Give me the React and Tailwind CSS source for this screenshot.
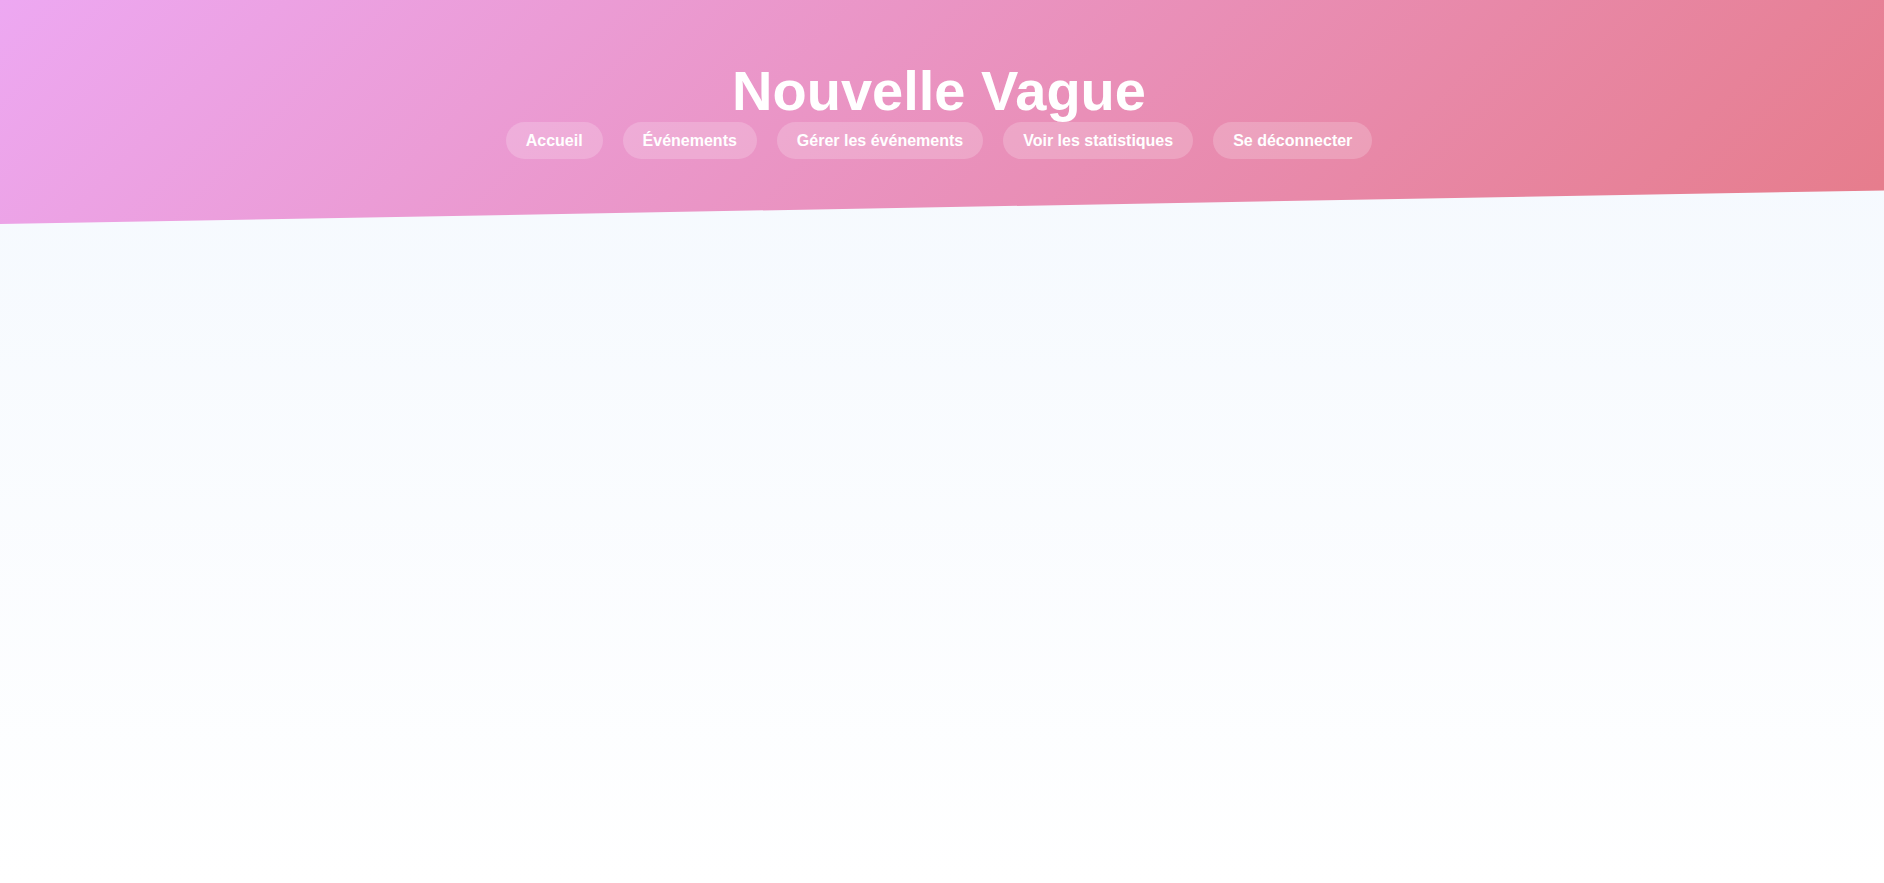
import React from 'react'

const NAV = ['Accueil', 'Événements', 'Gérer les événements', 'Voir les statistiques', 'Se déconnecter']

// ── En-tête en biais ─────────────────────────────────────────
function Header() {
  return (
    <header className="h-[224px] pt-[63px] pr-[6px] bg-[linear-gradient(135deg,#eda8f2_0%,#e67c8b_100%)] [clip-path:polygon(0_0,100%_0,100%_85%,0_100%)]">
      <h1 className="text-center text-white font-bold text-[56px] leading-none">Nouvelle Vague</h1>
      <nav className="mt-[3px] flex justify-center gap-5">
        {NAV.map(label => (
          <a
            key={label}
            href="#"
            className="px-5 py-[9px] rounded-full bg-white/20 text-white font-bold text-base leading-[1.2]"
          >
            {label}
          </a>
        ))}
      </nav>
    </header>
  )
}

export default function App() {
  return (
    <div className="min-h-screen bg-gradient-to-b from-[#f3f8fe] to-white font-['Liberation_Sans',Arial,sans-serif]">
      <Header />
    </div>
  )
}
